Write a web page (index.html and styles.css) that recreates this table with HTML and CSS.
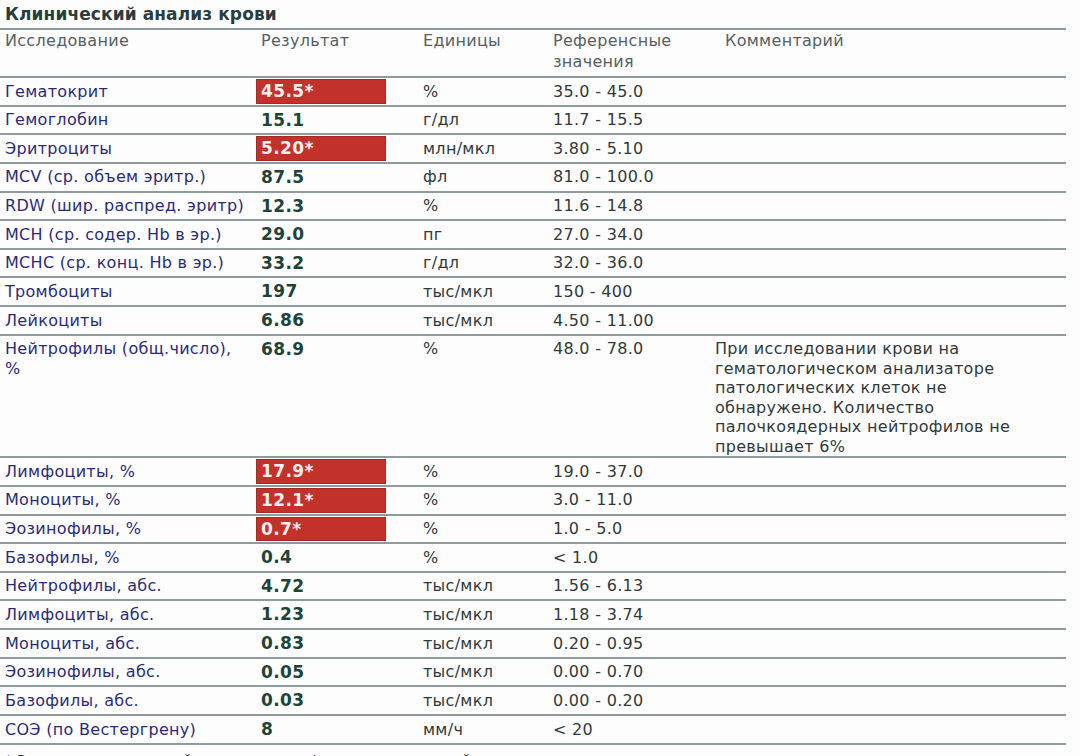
FILE: index.html
```html
<!DOCTYPE html>
<html lang="ru">
<head>
<meta charset="utf-8">
<title>Клинический анализ крови</title>
<link rel="stylesheet" href="styles.css">
</head>
<body>
<div class="page">
  <h1 class="title">Клинический анализ крови</h1>
  <div class="table">
    <div class="row head">
      <div class="c name">Исследование</div>
      <div class="c res">Результат</div>
      <div class="c unit">Единицы</div>
      <div class="c ref">Референсные<br>значения</div>
      <div class="c com">Комментарий</div>
    </div>
    <div class="row"><div class="c name">Гематокрит</div><div class="c res"><span class="val bad">45.5*</span></div><div class="c unit">%</div><div class="c ref">35.0 - 45.0</div><div class="c com"></div></div>
    <div class="row"><div class="c name">Гемоглобин</div><div class="c res"><span class="val">15.1</span></div><div class="c unit">г/дл</div><div class="c ref">11.7 - 15.5</div><div class="c com"></div></div>
    <div class="row"><div class="c name">Эритроциты</div><div class="c res"><span class="val bad">5.20*</span></div><div class="c unit">млн/мкл</div><div class="c ref">3.80 - 5.10</div><div class="c com"></div></div>
    <div class="row"><div class="c name">MCV (ср. объем эритр.)</div><div class="c res"><span class="val">87.5</span></div><div class="c unit">фл</div><div class="c ref">81.0 - 100.0</div><div class="c com"></div></div>
    <div class="row"><div class="c name">RDW (шир. распред. эритр)</div><div class="c res"><span class="val">12.3</span></div><div class="c unit">%</div><div class="c ref">11.6 - 14.8</div><div class="c com"></div></div>
    <div class="row"><div class="c name">MCH (ср. содер. Hb в эр.)</div><div class="c res"><span class="val">29.0</span></div><div class="c unit">пг</div><div class="c ref">27.0 - 34.0</div><div class="c com"></div></div>
    <div class="row"><div class="c name">MCHC (ср. конц. Hb в эр.)</div><div class="c res"><span class="val">33.2</span></div><div class="c unit">г/дл</div><div class="c ref">32.0 - 36.0</div><div class="c com"></div></div>
    <div class="row"><div class="c name">Тромбоциты</div><div class="c res"><span class="val">197</span></div><div class="c unit">тыс/мкл</div><div class="c ref">150 - 400</div><div class="c com"></div></div>
    <div class="row"><div class="c name">Лейкоциты</div><div class="c res"><span class="val">6.86</span></div><div class="c unit">тыс/мкл</div><div class="c ref">4.50 - 11.00</div><div class="c com"></div></div>
    <div class="row"><div class="c name">Нейтрофилы (общ.число),<br>%</div><div class="c res"><span class="val">68.9</span></div><div class="c unit">%</div><div class="c ref">48.0 - 78.0</div><div class="c com note">При исследовании крови на<br>гематологическом анализаторе<br>патологических клеток не<br>обнаружено. Количество<br>палочкоядерных нейтрофилов не<br>превышает 6%</div></div>
    <div class="row"><div class="c name">Лимфоциты, %</div><div class="c res"><span class="val bad">17.9*</span></div><div class="c unit">%</div><div class="c ref">19.0 - 37.0</div><div class="c com"></div></div>
    <div class="row"><div class="c name">Моноциты, %</div><div class="c res"><span class="val bad">12.1*</span></div><div class="c unit">%</div><div class="c ref">3.0 - 11.0</div><div class="c com"></div></div>
    <div class="row"><div class="c name">Эозинофилы, %</div><div class="c res"><span class="val bad">0.7*</span></div><div class="c unit">%</div><div class="c ref">1.0 - 5.0</div><div class="c com"></div></div>
    <div class="row"><div class="c name">Базофилы, %</div><div class="c res"><span class="val">0.4</span></div><div class="c unit">%</div><div class="c ref">&lt; 1.0</div><div class="c com"></div></div>
    <div class="row"><div class="c name">Нейтрофилы, абс.</div><div class="c res"><span class="val">4.72</span></div><div class="c unit">тыс/мкл</div><div class="c ref">1.56 - 6.13</div><div class="c com"></div></div>
    <div class="row"><div class="c name">Лимфоциты, абс.</div><div class="c res"><span class="val">1.23</span></div><div class="c unit">тыс/мкл</div><div class="c ref">1.18 - 3.74</div><div class="c com"></div></div>
    <div class="row"><div class="c name">Моноциты, абс.</div><div class="c res"><span class="val">0.83</span></div><div class="c unit">тыс/мкл</div><div class="c ref">0.20 - 0.95</div><div class="c com"></div></div>
    <div class="row"><div class="c name">Эозинофилы, абс.</div><div class="c res"><span class="val">0.05</span></div><div class="c unit">тыс/мкл</div><div class="c ref">0.00 - 0.70</div><div class="c com"></div></div>
    <div class="row"><div class="c name">Базофилы, абс.</div><div class="c res"><span class="val">0.03</span></div><div class="c unit">тыс/мкл</div><div class="c ref">0.00 - 0.20</div><div class="c com"></div></div>
    <div class="row"><div class="c name">СОЭ (по Вестергрену)</div><div class="c res"><span class="val">8</span></div><div class="c unit">мм/ч</div><div class="c ref">&lt; 20</div><div class="c com"></div></div>
  </div>
  <p class="foot">* Результат, выходящий за пределы референсных значений</p>
</div>
</body>
</html>
```

FILE: styles.css
```css
html, body {
  margin: 0;
  padding: 0;
  background: #fdfdfd;
  overflow: hidden;
}
body {
  font-family: "DejaVu Sans", Verdana, sans-serif;
  font-size: 16px;
  letter-spacing: 0.3px;
  color: #2f3a3a;
}
.page {
  width: 1066px;
}
.title {
  margin: 0;
  padding: 4px 0 3px 5px;
  font-size: 17px;
  letter-spacing: 0.1px;
  line-height: 21px;
  font-weight: bold;
  color: #2a3d3d;
  border-bottom: 2px solid #8c9b9b;
}
.row {
  display: grid;
  grid-template-columns: 253px 165px 130px 162px 1fr;
  border-bottom: 2px solid #8c9b9b;
  min-height: 26.65px;
}
.c {
  padding: 3.5px 5px 3px 5px;
  line-height: 19.5px;
  white-space: nowrap;
}
.name {
  color: #2a2b78;
}
.head .c {
  color: #566060;
  padding-top: 1px;
  padding-bottom: 4px;
  line-height: 20.5px;
}
.head .name { color: #566060; }
.head .res { padding-left: 8px; }
.head .com { padding-left: 15px; }
.res {
  padding: 1px 0 1px 3px;
  display: flex;
}
.val {
  display: block;
  width: 130px;
  box-sizing: border-box;
  padding: 3px 5px 2px 5px;
  font-weight: bold;
  font-size: 17px;
  letter-spacing: 0.4px;
  line-height: 19.5px;
  color: #1d4439;
}
.val.bad {
  background: #c3312b;
  color: #fbeeee;
  border: 1px solid #a52a25;
  padding: 2px 4px 1px 4px;
}
.unit, .ref, .com {
  color: #303a3a;
}
.note {
  color: #303a3a;
  padding-top: 3.5px;
  padding-bottom: 0;
}
.foot {
  margin: 7px 0 0 5px;
  font-size: 14px;
  color: #333;
}
```
